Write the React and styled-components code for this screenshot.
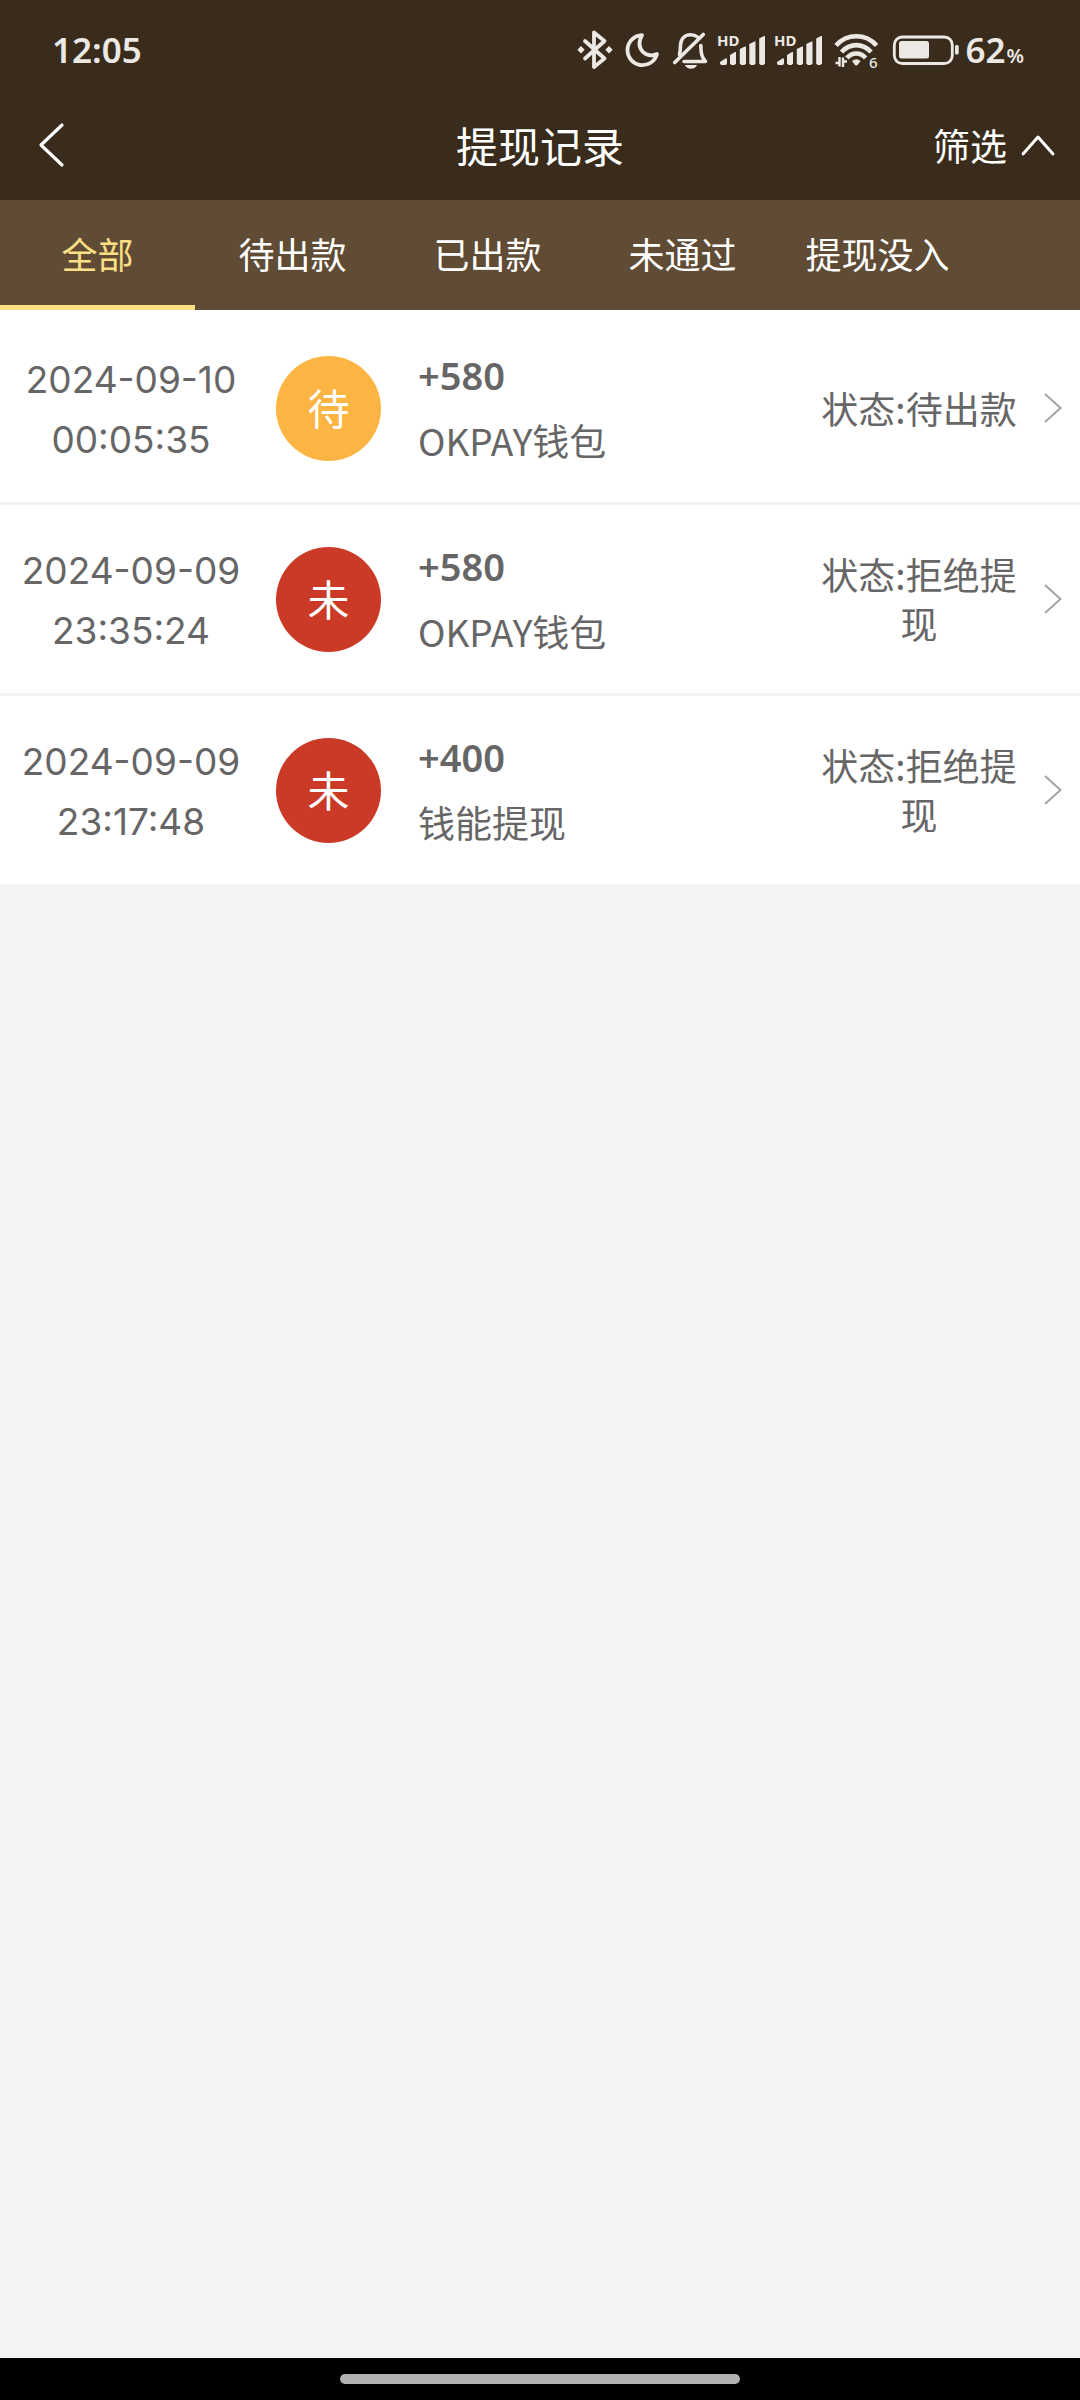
import React, { useState } from "react";
import styled, { createGlobalStyle } from "styled-components";

const tabs = ["全部", "待出款", "已出款", "未通过", "提现没入"];

const records = [
    { id: 1, date: "2024-09-10", time: "00:05:35", badge: "待", type: "pending", amount: "+580", method: "OKPAY钱包", status: "待出款" },
    { id: 2, date: "2024-09-09", time: "23:35:24", badge: "未", type: "rejected", amount: "+580", method: "OKPAY钱包", status: "拒绝提现" },
    { id: 3, date: "2024-09-09", time: "23:17:48", badge: "未", type: "rejected", amount: "+400", method: "钱能提现", status: "拒绝提现" },
];

const badgeColors = {
    pending: "#fcb442",
    rejected: "#cb3a27",
};

function BluetoothIcon() {
    return (
        <svg width="38" height="40" viewBox="0 0 38 40" fill="none">
            <path d="M9 11L28.5 28.5L18 37V2.5L28.5 11L9 28.5" stroke="currentColor" strokeWidth="3.8" strokeLinejoin="round" strokeLinecap="round" />
            <path d="M5 16L8.700 19.700L5 23.400L1.300 19.700ZM33 16L36.700 19.700L33 23.400L29.300 19.700Z" fill="currentColor" />
        </svg>
    );
}

function MoonIcon() {
    return (
        <svg width="39" height="40" viewBox="0 0 39 40" fill="none">
            <path d="M19 5.200A15 15 0 1 0 34 24C25 29 11 20 19 5.200Z" stroke="currentColor" strokeWidth="3.8" strokeLinejoin="round" />
        </svg>
    );
}

function BellOffIcon() {
    return (
        <svg width="37" height="40" viewBox="0 0 37 40" fill="none">
            <g stroke="currentColor" strokeWidth="3.6" strokeLinecap="round" strokeLinejoin="round">
                <path d="M3.700 32.500L32.300 4.500" />
                <path d="M8.500 24.500C9.500 21 9.300 18 9.500 15C10 8 14.500 4.700 19.500 4.700C22 4.700 24.500 5.300 26.500 7" />
                <path d="M29.800 15.500C30 23 30.500 27 34.500 31.500H13" />
            </g>
            <path d="M14 35H26C25 37.700 22.800 38.700 20 38.700S15 37.700 14 35Z" fill="currentColor" />
        </svg>
    );
}

function SignalIcon() {
    return (
        <svg width="48" height="40" viewBox="0 0 48 40" fill="currentColor">
            <text x="0" y="16" fontFamily="Noto Sans, sans-serif" fontSize="15" fontWeight="700">HD</text>
            <path d="M3 33V32L8.500 28.500H10V33Q10 35 8.500 35H4.500Q3 35 3 33Z" />
            <path d="M13 25L18 22H19V33.500L17.500 35H14.500L13 33.500Z" />
            <path d="M22.800 19L28 16.500H29V33.500L27.500 35H24.300L22.800 33.500Z" />
            <path d="M32.300 14L37.500 11.500H38.500V33.500L37 35H33.800L32.300 33.500Z" />
            <path d="M42.200 8.500L47 6H48V33.500L46.500 35H43.700L42.200 33.500Z" />
        </svg>
    );
}

function WifiIcon() {
    return (
        <svg width="52" height="40" viewBox="0 0 52 40" fill="none">
            <g stroke="currentColor" strokeWidth="4.6">
                <path d="M5 15.500C16 3.200 34.600 3.200 45.600 15.500" />
                <path d="M10.500 22C19 12.800 31.600 12.800 40.100 22" />
                <path d="M16 28C21 22 29.600 22 34.600 28" />
            </g>
            <path d="M21 31Q25.300 27.500 29.600 31L26.500 35Q25.300 36.200 24 35Z" fill="currentColor" />
            <path d="M4.500 33H8.500V27M8.500 36.500V27M12 27.500V37M12 31.500H16" stroke="currentColor" strokeWidth="2.4" />
            <text x="38" y="38" fill="currentColor" fontFamily="Noto Sans, sans-serif" fontSize="15" fontWeight="500">6</text>
        </svg>
    );
}

function BatteryIcon() {
    return (
        <svg width="68" height="40" viewBox="0 0 68 40" fill="none">
            <rect x="2.300" y="7" width="58" height="26.500" rx="8" stroke="currentColor" strokeWidth="2.8" />
            <rect x="7" y="11" width="30" height="17.500" rx="2.500" fill="currentColor" />
            <rect x="63" y="15" width="3.700" height="9.500" rx="1.500" fill="currentColor" />
        </svg>
    );
}

function RecordItem({ record }) {
    return (
        <li>
            <RecordLink href={"#record-" + record.id}>
                <DateCell>
                    <span>{record.date}</span>
                    <span>{record.time}</span>
                </DateCell>
                <Badge $type={record.type}>{record.badge}</Badge>
                <Info>
                    <Amount>{record.amount}</Amount>
                    <span>{record.method}</span>
                </Info>
                <Status>状态:{record.status}</Status>
                <svg width="18" height="30" viewBox="0 0 18 30" fill="none">
                    <path d="M1 1L16.500 15L1 29" stroke="#a3a3a3" strokeWidth="2" />
                </svg>
            </RecordLink>
        </li>
    );
}

function App() {
    const [activeTab, setActiveTab] = useState(0);

    return (
        <>
            <GlobalStyle />
            <Page>
                <Header>
                    <StatusBar>
                        <Clock>12:05</Clock>
                        <StatusIcons>
                            <BluetoothIcon />
                            <MoonIcon />
                            <BellOffIcon />
                            <SignalIcon />
                            <SignalIcon />
                            <WifiIcon />
                            <BatteryIcon />
                        </StatusIcons>
                        <Level>62<small>%</small></Level>
                    </StatusBar>
                    <NavBar>
                        <BackButton type="button" aria-label="返回">
                            <svg width="28" height="46" viewBox="0 0 28 46" fill="none">
                                <path d="M25 3L4 23L25 43" stroke="currentColor" strokeWidth="3.2" strokeLinecap="round" strokeLinejoin="round" />
                            </svg>
                        </BackButton>
                        <Title>提现记录</Title>
                        <FilterButton type="button">
                            筛选
                            <svg width="34" height="22" viewBox="0 0 34 22" fill="none">
                                <path d="M2 20L17 3L32 20" stroke="currentColor" strokeWidth="3" strokeLinecap="round" strokeLinejoin="round" />
                            </svg>
                        </FilterButton>
                    </NavBar>
                </Header>
                <TabBar role="tablist">
                    {tabs.map((tab, index) => (
                        <Tab
                            key={tab}
                            type="button"
                            role="tab"
                            aria-selected={index === activeTab}
                            $active={index === activeTab}
                            onClick={() => setActiveTab(index)}
                        >
                            {tab}
                        </Tab>
                    ))}
                </TabBar>
                <Main>
                    <RecordList>
                        {records.map((record) => (
                            <RecordItem key={record.id} record={record} />
                        ))}
                    </RecordList>
                </Main>
                <GestureBar>
                    <GesturePill />
                </GestureBar>
            </Page>
        </>
    );
}

const GlobalStyle = createGlobalStyle`
    * {
        box-sizing: border-box;
    }

    body {
        margin: 0;
        background: #f3f3f3;
        color: #666;
        font-family: "Noto Sans CJK SC", sans-serif;
        font-size: 37px;
    }

    button {
        padding: 0;
        border: none;
        background: none;
        color: inherit;
        font: inherit;
        cursor: pointer;
    }

    svg {
        display: block;
        flex-shrink: 0;
        overflow: visible;
    }
`;

const Page = styled.div`
    display: flex;
    flex-direction: column;
    min-height: 100vh;
`;

const Header = styled.header`
    background: #392c1c;
    color: #fff;
`;

const StatusBar = styled.div`
    display: flex;
    align-items: center;
    height: 90px;
    padding: 10px 56px 0 52px;
    color: #ece8e4;
    font-family: "Noto Sans", sans-serif;
    font-size: 35px;
    font-weight: 600;
    line-height: 40px;
`;

const Clock = styled.time`
    margin-right: auto;
`;

const StatusIcons = styled.div`
    display: flex;
    gap: 9px;
    margin-right: 5px;
`;

const Level = styled.span`
    small {
        margin-left: 1px;
        font-size: 20px;
        line-height: 20px;
    }
`;

const NavBar = styled.div`
    display: grid;
    grid-template-columns: 1fr auto 1fr;
    align-items: center;
    height: 110px;
    padding: 0 25px;
`;

const BackButton = styled.button`
    justify-self: start;
    padding: 0 12px;
`;

const Title = styled.h1`
    margin: 0;
    font-size: 42px;
    font-weight: 400;
    line-height: 60px;
`;

const FilterButton = styled.button`
    display: flex;
    align-items: center;
    justify-self: end;
    gap: 14px;
`;

const TabBar = styled.div`
    display: flex;
    height: 110px;
    background: #604b35;
    color: #fff;
`;

const Tab = styled.button`
    flex: 0 0 195px;
    border-bottom: 5px solid ${(props) => (props.$active ? "#fae07f" : "transparent")};
    color: ${(props) => (props.$active ? "#fbe085" : "#fff")};
    font-size: 36px;
    white-space: nowrap;
`;

const Main = styled.main`
    flex: 1;
`;

const RecordList = styled.ul`
    margin: 0;
    padding: 4px 0 0;
    background: #fff;
    list-style: none;

    li + li {
        border-top: 3px solid #f3f3f3;
    }
`;

const RecordLink = styled.a`
    display: flex;
    align-items: center;
    height: 188px;
    padding-right: 18px;
    color: inherit;
    text-decoration: none;
`;

const DateCell = styled.div`
    display: flex;
    flex-direction: column;
    flex: 0 0 262px;
    padding-top: 3px;
    font-family: Inter, sans-serif;
    line-height: 60px;
    text-align: center;
`;

const Badge = styled.span`
    display: flex;
    align-items: center;
    justify-content: center;
    flex: 0 0 105px;
    height: 105px;
    margin: 0 37px 0 14px;
    padding-bottom: 4px;
    border-radius: 50%;
    background: ${(props) => badgeColors[props.$type]};
    color: #fff;
    font-size: 42px;
`;

const Info = styled.div`
    display: flex;
    flex-direction: column;
    flex: 1;
    line-height: 65px;
`;

const Amount = styled.span`
    font-family: "Noto Sans", sans-serif;
    font-size: 38px;
    font-weight: 600;
`;

const Status = styled.div`
    flex: 0 0 216px;
    margin-right: 17px;
    line-height: 49px;
    text-align: center;
`;

const GestureBar = styled.footer`
    display: flex;
    align-items: center;
    justify-content: center;
    height: 42px;
    background: #000;
`;

const GesturePill = styled.span`
    width: 37%;
    height: 10px;
    border-radius: 5px;
    background: #b2b2b2;
`;

export default App;
